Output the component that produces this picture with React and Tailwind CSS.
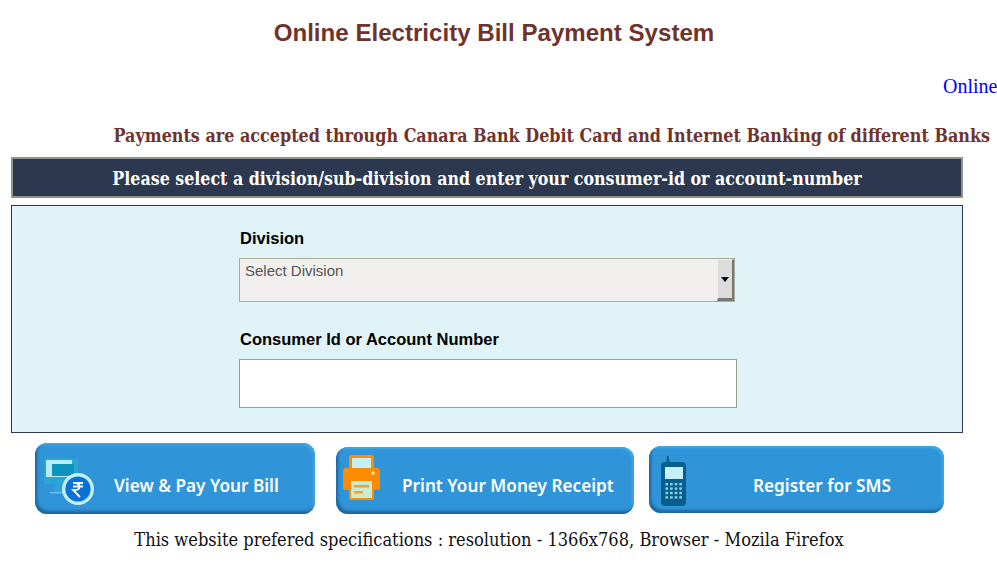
import React from "react";

const serif = "font-['DejaVu_Serif_Condensed','DejaVu_Serif',serif]";

function BillIcon() {
  return (
    <svg width="52" height="50" viewBox="0 0 52 50" className="shrink-0">
      <rect x="0" y="0" width="34" height="26" rx="2" fill="#2aa5d8" />
      <rect x="2" y="2" width="26" height="17" fill="#b9ecf5" />
      <rect x="8" y="6" width="22" height="12" fill="#0e93bd" />
      <path d="M12 26h6l2 8H10z" fill="#2aa5d8" />
      <rect x="6" y="34" width="18" height="1.4" fill="#6dbfe6" />
      <circle cx="34" cy="31" r="16" fill="#c3eef6" />
      <circle cx="34" cy="31" r="12.6" fill="#0a72d6" />
      <path d="M29 25h10M29 28.5h10M31 25c6 0 6 7 0 7h-2l7 7" fill="none" stroke="#fff" strokeWidth="1.8" />
    </svg>
  );
}

function PrinterIcon() {
  return (
    <svg width="37" height="45" viewBox="0 0 37 45" className="shrink-0">
      <rect x="6" y="0" width="25" height="14" rx="2" fill="#ff8c00" />
      <rect x="9" y="3" width="19" height="11" fill="#c5f0f7" />
      <rect x="0" y="13" width="37" height="22" rx="3" fill="#ff8c00" />
      <circle cx="30" cy="18" r="1.8" fill="#ffd9a0" />
      <rect x="6" y="24" width="25" height="21" rx="2" fill="#ff8c00" />
      <rect x="8" y="26" width="21" height="17" fill="#c5ecd8" />
      <rect x="11" y="30" width="15" height="2.5" fill="#ff9d20" />
      <rect x="11" y="36" width="9" height="2.5" fill="#ff9d20" />
    </svg>
  );
}

function PhoneIcon() {
  const keys = [];
  for (let r = 0; r < 4; r++) {
    for (let c = 0; c < 4; c++) {
      keys.push(<rect key={`${r}-${c}`} x={5.5 + c * 4.6} y={28 + r * 4.4} width="2.6" height="2.4" fill="#8fd0e4" />);
    }
  }
  return (
    <svg width="27" height="51" viewBox="0 0 27 51" className="shrink-0">
      <path d="M6 8l1-7h1.6l1 7z" fill="#075f8d" />
      <rect x="1" y="7" width="25" height="44" rx="4" fill="#075f8d" />
      <rect x="5" y="12" width="18" height="12" fill="#c5f0fa" />
      {keys}
    </svg>
  );
}

function PayButton({ icon, label, className, iconClass, labelClass }) {
  return (
    <a
      href="#"
      className={`flex relative items-center rounded-xl bg-[#3094d8] shadow-[inset_2px_-3px_3px_#1f659e,inset_-2px_2px_2px_#3fa8e2] ${className}`}
    >
      <span className={`absolute ${iconClass}`}>{icon}</span>
      <span className={`text-white font-semibold text-[17.2px] font-['Noto_Sans',sans-serif] whitespace-nowrap ${labelClass}`}>{label}</span>
    </a>
  );
}

export default function App() {
  return (
    <div className="w-[997px] h-[569px] overflow-hidden bg-white">
      <h1 className="pt-[18px] pr-[9px] text-center text-[24.1px] leading-[30px] font-bold text-[#6f332c] font-['Liberation_Sans',sans-serif]">
        Online Electricity Bill Payment System
      </h1>

      {/* moving notice, caught at its start */}
      <div className="mt-[26px] h-[24px] pl-[943px] overflow-hidden whitespace-nowrap text-[20px] leading-[24px] text-[#0000ff] font-['Liberation_Serif',serif]">
        Online
      </div>

      <p className={`mt-[26px] pr-[7px] text-right text-[17.8px] leading-[24px] font-bold text-[#6f332c] whitespace-nowrap ${serif}`}>
        Payments are accepted through Canara Bank Debit Card and Internet Banking of different Banks
      </p>

      <div className="mx-[11px] w-[952px]">
        <div className={`mt-[9px] h-[41px] border-2 border-[#8f9488] bg-[#2b384f] text-center text-white font-bold text-[17.65px] leading-[39px] whitespace-nowrap ${serif}`}>
          Please select a division/sub-division and enter your consumer-id or account-number
        </div>

        <div className="mt-[7px] h-[228px] border border-[#2b384f] bg-[#e0f3f7] pl-[227px] pt-[21px]">
          <label className="block ml-[1px] text-[16.5px] leading-[22px] font-bold text-black font-['Liberation_Sans',sans-serif]">Division</label>
          <div className="mt-[9px] relative w-[496px] h-[44px] border border-[#a9ad96] bg-[#f1f0ee] pl-[5px] pt-[3px] text-[15px] leading-[18px] text-[#555] font-['Liberation_Sans',sans-serif]">
            Select Division
            <span className="absolute right-0 top-0 bottom-0 w-[17px] flex items-center justify-center bg-[#dcdcdc] border-t border-t-[#eee] border-r-2 border-r-[#777] border-b-3 border-b-[#777] border-l border-l-[#eee]">
              <span className="w-0 h-0 border-x-[4px] border-x-transparent border-t-[5px] border-t-black"></span>
            </span>
          </div>
          <label className="block ml-[1px] mt-[26px] text-[16.5px] leading-[22px] font-bold text-black font-['Liberation_Sans',sans-serif]">
            Consumer Id or Account Number
          </label>
          <input className="block mt-[9px] w-[498px] h-[49px] border border-[#9aa08a] bg-white outline-none" />
        </div>
      </div>

      <div className="h-[81px] flex items-end pl-[35px]">
        <PayButton
          icon={<BillIcon />}
          label="View & Pay Your Bill"
          className="w-[280px] h-[71px]"
          iconClass="left-[9px] top-[15px]"
          labelClass="ml-[79px] pt-[15px]"
        />
        <PayButton
          icon={<PrinterIcon />}
          label="Print Your Money Receipt"
          className="ml-[21px] w-[298px] h-[67px]"
          iconClass="left-[7px] top-[8px]"
          labelClass="ml-[66px] pt-[11px]"
        />
        <PayButton
          icon={<PhoneIcon />}
          label="Register for SMS"
          className="ml-[15px] mb-[1px] w-[295px] h-[67px]"
          iconClass="left-[11px] top-[9px]"
          labelClass="ml-[104px] pt-[12px]"
        />
      </div>

      <p className={`mt-[14px] text-center text-[18.1px] leading-[24px] text-[#111] whitespace-nowrap pr-[19px] ${serif}`}>
        This website prefered specifications : resolution - 1366x768, Browser - Mozila Firefox
      </p>
    </div>
  );
}
